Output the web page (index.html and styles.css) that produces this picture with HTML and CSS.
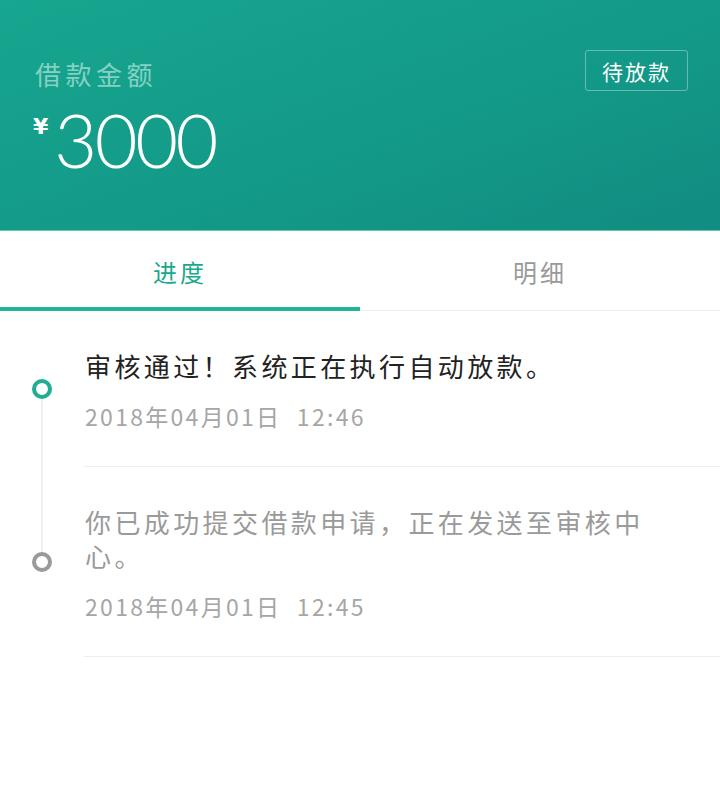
FILE: index.html
```html
<!DOCTYPE html>
<html lang="zh-CN">
<head>
<meta charset="utf-8">
<title>借款进度</title>
<link rel="stylesheet" href="styles.css">
</head>
<body>
<header class="hero">
  <div class="hero-main">
    <div class="hero-label">借款金额</div>
    <div class="amount"><span class="currency">¥</span><span class="value">3000</span></div>
  </div>
  <div class="status">待放款</div>
</header>
<nav class="tabs">
  <div class="tab active">进度</div>
  <div class="tab">明细</div>
</nav>
<ul class="timeline">
  <li class="step first current">
    <div class="rail"><span class="seg top"></span><span class="dot"></span><span class="seg bottom"></span></div>
    <div class="content">
      <p class="title">审核通过！系统正在执行自动放款。</p>
      <p class="time">2018年04月01日 12:46</p>
    </div>
  </li>
  <li class="step last">
    <div class="rail"><span class="seg top"></span><span class="dot"></span><span class="seg bottom"></span></div>
    <div class="content">
      <p class="title">你已成功提交借款申请，正在发送至审核中心。</p>
      <p class="time">2018年04月01日 12:45</p>
    </div>
  </li>
</ul>
</body>
</html>
```
FILE: styles.css
```css
* { box-sizing: border-box; }
html, body { margin: 0; padding: 0; background: #fff; }
body {
  font-family: "Noto Sans CJK SC", "Noto Sans", sans-serif;
  width: 720px;
}
.hero {
  height: 231px;
  background: linear-gradient(160deg, #17a68f 0%, #139a88 55%, #128c80 100%);
  display: flex;
  justify-content: space-between;
  align-items: flex-start;
  padding: 50px 32px 0 33px;
  border-bottom: 1px solid #5ec9b8;
}
.hero-label {
  font-size: 26px;
  line-height: 40px;
  letter-spacing: 4.5px;
  color: #84d2c3;
  padding-left: 2px;
  margin-top: 4px;
}
.amount {
  display: flex;
  align-items: flex-start;
  color: #fff;
  margin-top: 4px;
}
.currency {
  font-family: "DejaVu Sans", sans-serif;
  font-weight: bold;
  font-size: 22px;
  line-height: 30px;
  margin-top: 14px;
  margin-right: 6px;
}
.value {
  font-family: "Lato", sans-serif;
  font-weight: 300;
  font-size: 74px;
  line-height: 80px;
  letter-spacing: -2.5px;
  margin-top: 2px;
}
.status {
  width: 103px;
  height: 41px;
  border: 1px solid rgba(255, 255, 255, 0.35);
  border-radius: 3px;
  color: #fff;
  font-size: 21px;
  letter-spacing: 2px;
  display: flex;
  align-items: center;
  justify-content: center;
}
.tabs {
  display: flex;
  height: 80px;
  border-bottom: 1px solid #ececec;
}
.tab {
  flex: 1;
  display: flex;
  align-items: center;
  justify-content: center;
  font-size: 24px;
  letter-spacing: 3px;
  color: #999;
  border-bottom: 4px solid transparent;
  margin-bottom: -1px;
  padding-top: 4px;
}
.tab.active {
  color: #1aa88c;
  border-bottom-color: #22b294;
}
.timeline {
  list-style: none;
  margin: 0;
  padding: 0;
}
.step {
  display: flex;
}
.rail {
  width: 84px;
  flex: none;
  display: flex;
  flex-direction: column;
  align-items: center;
}
.seg {
  flex: 1;
  width: 2px;
  background: #f0f0f0;
}
.first .seg.top, .last .seg.bottom { visibility: hidden; }
.dot {
  flex: none;
  width: 20px;
  height: 20px;
  border-radius: 50%;
  border: 4px solid #9a9a9a;
  background: #fff;
}
.current .dot { border-color: #1fae92; }
.content {
  flex: 1;
  padding: 38px 63px 35px 1px;
  border-bottom: 1px solid #eeeeee;
}
.title {
  margin: 0;
  font-size: 26px;
  line-height: 34px;
  letter-spacing: 3.4px;
  color: #9a9a9a;
}
.current .title { color: #222; }
.time {
  margin: 18px 0 0;
  font-size: 23px;
  line-height: 30px;
  letter-spacing: 2.3px;
  word-spacing: 8px;
  color: #a6a6a6;
}
```
